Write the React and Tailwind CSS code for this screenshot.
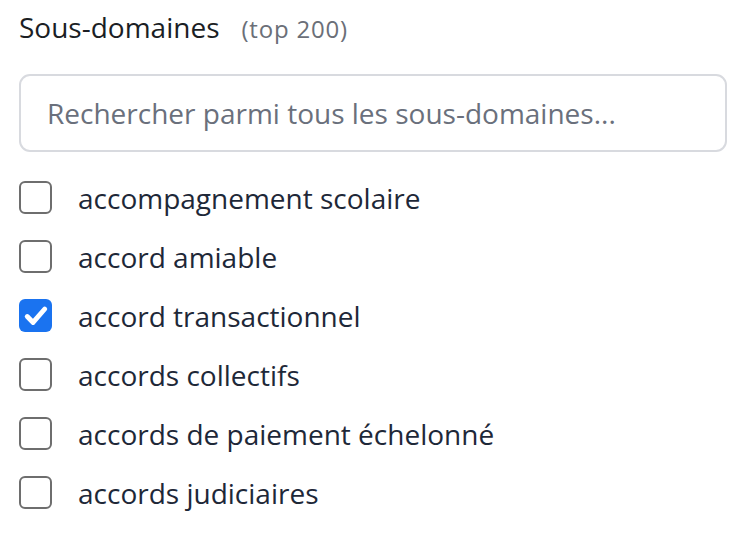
import { useState } from "react";

const items = [
  { label: "accompagnement scolaire", checked: false },
  { label: "accord amiable", checked: false },
  { label: "accord transactionnel", checked: true },
  { label: "accords collectifs", checked: false },
  { label: "accords de paiement échelonné", checked: false },
  { label: "accords judiciaires", checked: false },
];

function Checkbox({ checked }) {
  if (checked) {
    return (
      <span className="flex items-center justify-center w-[33px] h-[33px] rounded-[6px] bg-[#1a73f0] shrink-0">
        <svg viewBox="0 0 24 24" className="w-[28px] h-[28px]" fill="none">
          <path
            d="M4.5 12.5l5 5L19.5 6"
            stroke="white"
            strokeWidth="4.2"
            strokeLinecap="round"
            strokeLinejoin="round"
          />
        </svg>
      </span>
    );
  }
  return (
    <span className="w-[33px] h-[33px] rounded-[6px] border-2 border-[#6e6e6e] bg-white shrink-0" />
  );
}

export default function App() {
  const [list, setList] = useState(items);

  return (
    <div className="min-h-[540px] bg-white px-[19px] pt-[9px] font-['Open_Sans',sans-serif]">
      <div className="flex items-baseline leading-[36px]">
        <span className="text-[28px] text-[#1b1e24]">Sous-domaines</span>
        <span className="ml-[22px] text-[24px] tracking-[0.8px] text-[#6b6f78]">(top 200)</span>
      </div>
      <div className="mt-[27px] flex items-center h-[78px] w-[708px] rounded-[11px] border-2 border-[#d8dadf] px-[26px]">
        <input
          className="w-full outline-none text-[28px] text-[#1b1e24] placeholder:text-[#6a707c] bg-transparent"
          placeholder="Rechercher parmi tous les sous-domaines..."
        />
      </div>
      <div className="mt-[29px] flex flex-col gap-[26px]">
        {list.map((it, i) => (
          <label
            key={it.label}
            className="flex items-center h-[33px] cursor-pointer"
            onClick={() =>
              setList((l) =>
                l.map((x, j) => (j === i ? { ...x, checked: !x.checked } : x))
              )
            }
          >
            <Checkbox checked={it.checked} />
            <span className="ml-[26px] text-[28px] text-[#1e2838]">{it.label}</span>
          </label>
        ))}
      </div>
    </div>
  );
}
